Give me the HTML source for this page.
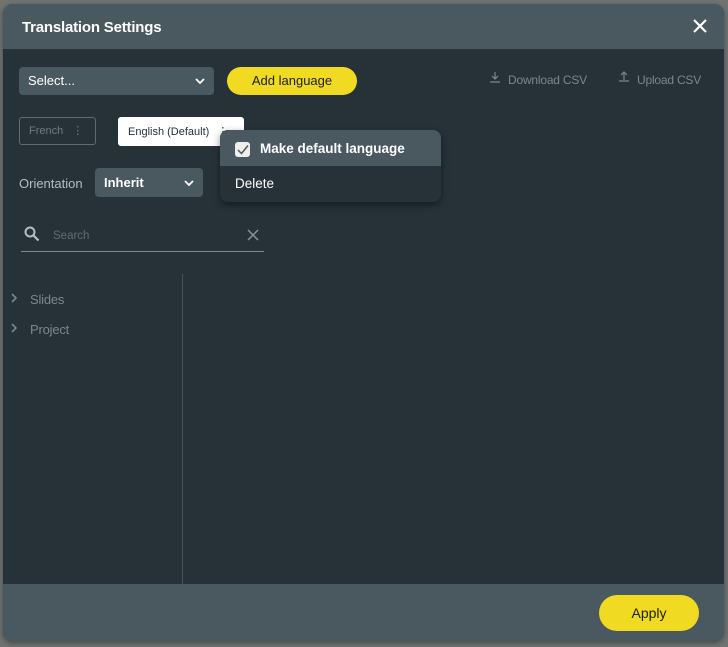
<!DOCTYPE html>
<html><head><style>
*{box-sizing:border-box;margin:0;padding:0}
body{width:728px;height:647px;background:#6f7472;font-family:"Liberation Sans",sans-serif;position:relative;overflow:hidden}
.dlg{position:absolute;left:3px;top:4px;width:721px;height:637px;background:#263238;border-radius:10px;overflow:hidden;box-shadow:0 2px 6px rgba(0,0,0,.4)}
.hdr{position:absolute;left:0;top:0;width:100%;height:45px;background:#4a5960}
.hdr .t{position:absolute;left:19px;top:15px;color:#fff;font-weight:bold;font-size:15px;letter-spacing:-0.2px}
.ftr{position:absolute;left:0;top:580px;width:100%;height:57px;background:#4a5960}
.abs{position:absolute}
.sel{background:#4a5960;border-radius:4px;color:#fff;font-size:13px}
.btn{background:#f0da22;border-radius:15px;color:#1e1e1e;font-size:13px;text-align:center}
.muted{color:#7b878c;font-size:12px;letter-spacing:-0.2px}
</style></head><body>
<div class="dlg">
 <div class="hdr"><div class="t">Translation Settings</div>
  <svg class="abs" style="left:689px;top:14px" width="16" height="16"><path d="M2 2L14 14M14 2L2 14" stroke="#fff" stroke-width="2.2"/></svg>
 </div>
 <div class="abs sel" style="left:16px;top:63px;width:195px;height:28px;line-height:28px;padding-left:9px">Select...
  <svg class="abs" style="left:176px;top:11px" width="10" height="7"><path d="M1 1L5 5L9 1" stroke="#fff" stroke-width="1.8" fill="none"/></svg></div>
 <div class="abs btn" style="left:224px;top:63px;width:130px;height:28px;line-height:28px">Add language</div>
 <svg class="abs" style="left:486px;top:67px" width="12" height="12"><path d="M6 1V8M3 5L6 8L9 5M1 11H11" stroke="#7b878c" stroke-width="1.2" fill="none"/></svg>
 <div class="abs muted" style="left:505px;top:69px">Download CSV</div>
 <svg class="abs" style="left:615px;top:66px" width="12" height="12"><path d="M6 10V2M3 5L6 2L9 5M1 11H11" stroke="#7b878c" stroke-width="1.2" fill="none"/></svg>
 <div class="abs muted" style="left:634px;top:69px">Upload CSV</div>
 <div class="abs" style="left:16px;top:113px;width:77px;height:28px;border:1px solid #5e6b71;border-radius:3px;color:#6f7b80;font-size:11px;line-height:27px;padding-left:9px">French <span style="margin-left:6px">⋮</span></div>
 <div class="abs" style="left:115px;top:113px;width:126px;height:29px;background:#fff;border-radius:3px;color:#263238;font-size:11px;line-height:30px;padding-left:10px">English (Default) <span style="margin-left:5px">⋮</span></div>
 <div class="abs" style="left:217px;top:126px;width:221px;height:72px;background:#263238;border-radius:8px;overflow:hidden;box-shadow:0 3px 8px rgba(0,0,0,.45)">
  <div style="height:36px;background:#4a5960;color:#fff;font-size:13.5px;font-weight:bold;line-height:38px;padding-left:40px;position:relative">
   <span class="abs" style="left:15px;top:12px;width:15px;height:15px;background:#eee;border-radius:3px"></span>
   <svg class="abs" style="left:17px;top:14px" width="12" height="11"><path d="M1 6L4.5 9.5L11 1.5" stroke="#555" stroke-width="1.5" fill="none"/></svg>
   Make default language</div>
  <div style="color:#fff;font-size:13.5px;line-height:36px;padding-left:15px">Delete</div>
 </div>
 <div class="abs" style="left:16px;top:172px;color:#b5bec2;font-size:13px">Orientation</div>
 <div class="abs sel" style="left:92px;top:164px;width:108px;height:29px;line-height:30px;padding-left:9px;font-weight:bold">Inherit
  <svg class="abs" style="left:89px;top:12px" width="10" height="7"><path d="M1 1L5 5L9 1" stroke="#fff" stroke-width="1.8" fill="none"/></svg></div>
 <svg class="abs" style="left:21px;top:222px" width="16" height="16"><circle cx="6" cy="6" r="4.5" stroke="#b5bec2" stroke-width="2" fill="none"/><path d="M9.5 9.5L14.5 14.5" stroke="#b5bec2" stroke-width="2.2"/></svg>
 <div class="abs" style="left:50px;top:226px;color:#5f6c72;font-size:11.5px">Search</div>
 <svg class="abs" style="left:244px;top:225px" width="12" height="12"><path d="M1 1L11 11M11 1L1 11" stroke="#8a959a" stroke-width="1.5"/></svg>
 <div class="abs" style="left:18px;top:247px;width:243px;height:1px;background:#7b878c"></div>
 <div class="abs" style="left:179px;top:270px;width:1px;height:310px;background:#46545a"></div>
 <svg class="abs" style="left:8px;top:289px" width="7" height="10"><path d="M1 1L5 5L1 9" stroke="#7b878c" stroke-width="1.6" fill="none"/></svg>
 <div class="abs muted" style="left:27px;top:288px;font-size:13px">Slides</div>
 <svg class="abs" style="left:8px;top:319px" width="7" height="10"><path d="M1 1L5 5L1 9" stroke="#7b878c" stroke-width="1.6" fill="none"/></svg>
 <div class="abs muted" style="left:27px;top:318px;font-size:13px">Project</div>
 <div class="ftr"><div class="abs btn" style="left:596px;top:11px;width:100px;height:36px;line-height:36px;border-radius:18px;font-size:14px">Apply</div></div>
</div>
</body></html>
